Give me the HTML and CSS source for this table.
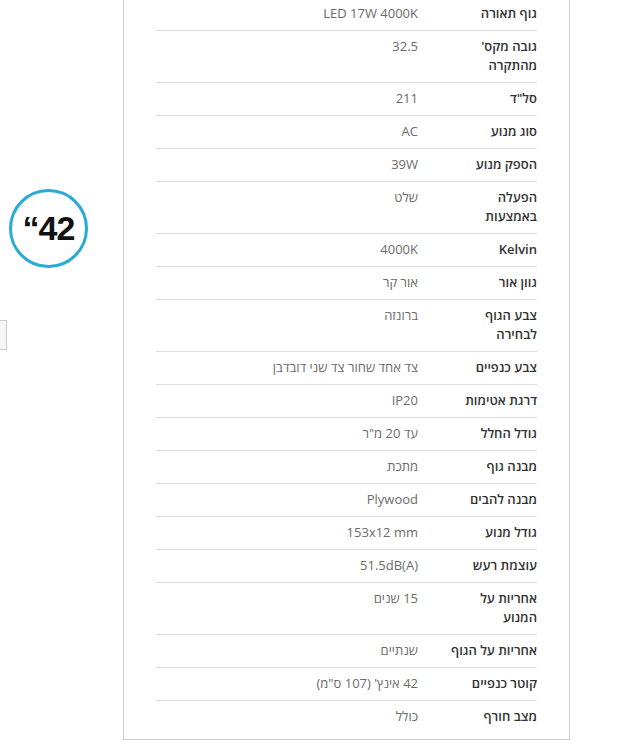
FILE: index.html
```html
<!DOCTYPE html>
<html lang="he">
<head>
    <meta charset="UTF-8">
    <meta name="viewport" content="width=device-width, initial-scale=1.0">
    <title>מפרט טכני</title>
    <link rel="stylesheet" href="styles.css">
</head>
<body>
    <div class="page">
        <div class="side">
            <div class="size-badge" dir="ltr">“42</div>
            <div class="side-tab"></div>
        </div>
        <div class="specs-panel">
            <table class="specs" dir="rtl">
                <tr><th>גוף תאורה</th><td>LED 17W 4000K</td></tr>
                <tr><th>גובה מקס'<br>מהתקרה</th><td>32.5</td></tr>
                <tr><th>סל"ד</th><td>211</td></tr>
                <tr><th>סוג מנוע</th><td>AC</td></tr>
                <tr><th>הספק מנוע</th><td>39W</td></tr>
                <tr><th>הפעלה<br>באמצעות</th><td>שלט</td></tr>
                <tr><th>Kelvin</th><td>4000K</td></tr>
                <tr><th>גוון אור</th><td>אור קר</td></tr>
                <tr><th>צבע הגוף<br>לבחירה</th><td>ברונזה</td></tr>
                <tr><th>צבע כנפיים</th><td>צד אחד שחור צד שני דובדבן</td></tr>
                <tr><th>דרגת אטימות</th><td>IP20</td></tr>
                <tr><th>גודל החלל</th><td>עד 20 מ"ר</td></tr>
                <tr><th>מבנה גוף</th><td>מתכת</td></tr>
                <tr><th>מבנה להבים</th><td>Plywood</td></tr>
                <tr><th>גודל מנוע</th><td>153x12 mm</td></tr>
                <tr><th>עוצמת רעש</th><td>51.5dB(A)</td></tr>
                <tr><th>אחריות על<br>המנוע</th><td>15 שנים</td></tr>
                <tr><th>אחריות על הגוף</th><td>שנתיים</td></tr>
                <tr><th>קוטר כנפיים</th><td>42 אינץ' (107 ס"מ)</td></tr>
                <tr><th>מצב חורף</th><td>כולל</td></tr>
            </table>
        </div>
    </div>
</body>
</html>
```

FILE: styles.css
```css
body {
    margin: 0;
    background-color: #fff;
    font-family: "Open Sans", "DejaVu Sans", sans-serif;
}
.page {
    display: flex;
    align-items: flex-start;
}
.side {
    width: 123px;
    display: flex;
    flex-direction: column;
}
.size-badge {
    width: 73px;
    height: 73px;
    margin: 189px 0 0 9px;
    border: 3px solid #29abd6;
    border-radius: 50%;
    display: flex;
    justify-content: center;
    align-items: center;
    font-family: "Liberation Sans", Arial, sans-serif;
    font-weight: bold;
    font-size: 34px;
    letter-spacing: -1px;
    color: #111;
}
.side-tab {
    width: 20px;
    height: 28px;
    margin: 52px 0 0 -15px;
    background-color: #f7f7f7;
    border: 1px solid #ccc;
}
.specs-panel {
    width: 381px;
    margin-top: -3px;
    padding: 0 32px 6px 32px;
    border: 1px solid #cfcfcf;
}
.specs {
    width: 100%;
    border-collapse: collapse;
    font-size: 13px;
    line-height: 19px;
}
.specs tr + tr {
    border-top: 1px solid #dcdcdc;
}
.specs th {
    width: 99px;
    padding: 6px 0 7px 20px;
    text-align: right;
    vertical-align: top;
    font-weight: 600;
    color: #333;
}
.specs td {
    padding: 6px 0 7px 0;
    text-align: right;
    vertical-align: top;
    color: #6b6b6b;
}
```
